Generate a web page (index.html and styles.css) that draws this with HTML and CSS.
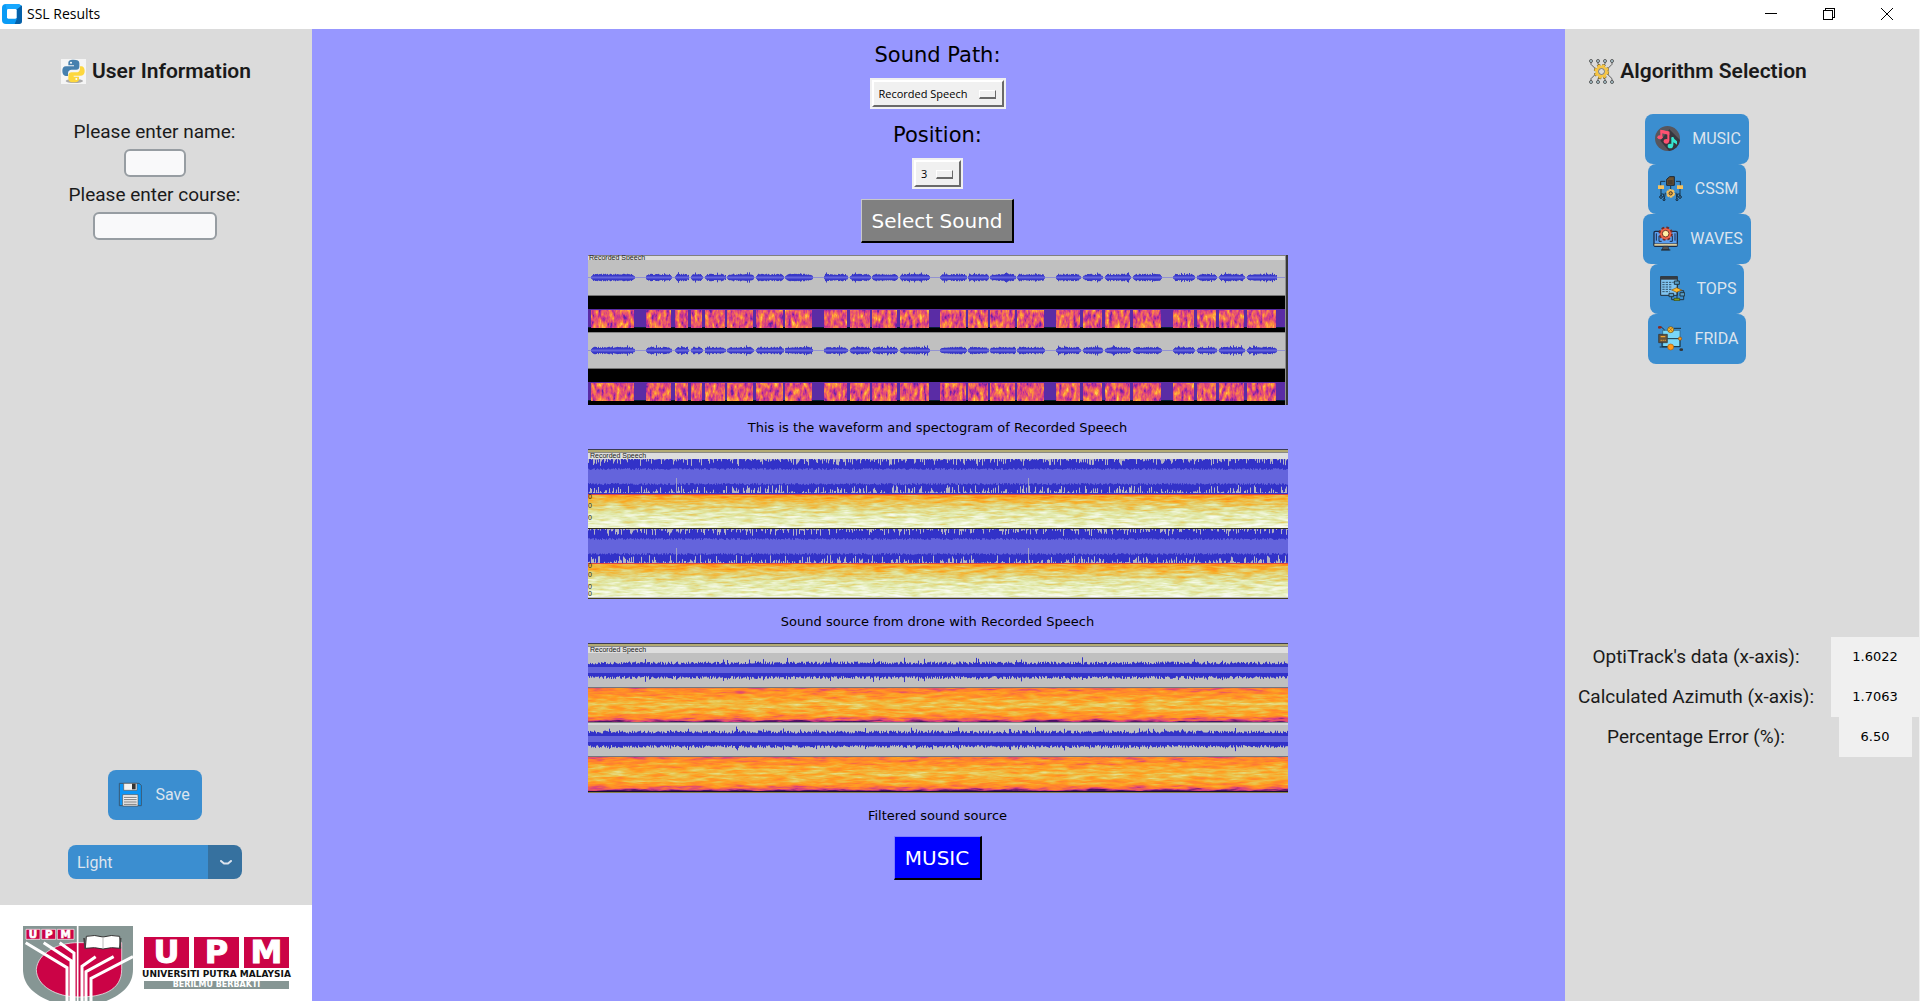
FILE: index.html
```html
<!DOCTYPE html>
<html lang="en">
<head>
<meta charset="utf-8">
<title>SSL Results</title>
<link rel="stylesheet" href="styles.css">
</head>
<body>
<header class="titlebar">
  <svg class="app-icon" viewBox="0 0 60 60" aria-hidden="true"><path fill="#0a9bf5" d="M12 0h36v60H12A12 12 0 0 1 0 48V12A12 12 0 0 1 12 0z"/><path fill="#0560a8" d="M60 6v46a8 8 0 0 1-8 8H38l6-14V14l6-10a9 9 0 0 1 10 2z"/><path fill="#18a8ff" d="M10 0h42l6 5-12 10H14z"/><rect x="15" y="15" width="29" height="29" rx="4" fill="#fff"/></svg>
  <h1 class="window-title">SSL Results</h1>
  <div class="window-buttons">
    <button class="window-button" aria-label="Minimize"><svg viewBox="0 0 12 12" shape-rendering="crispEdges"><path d="M0 5.500h12" /></svg></button>
    <button class="window-button" aria-label="Restore"><svg viewBox="0 0 12 12" shape-rendering="crispEdges"><path d="M.5 2.500h9v9h-9zM2.500 2V.5h9v9H10"/></svg></button>
    <button class="window-button" aria-label="Close"><svg viewBox="0 0 12 12"><path d="M0 0l12 12M12 0L0 12"/></svg></button>
  </div>
</header>
<div class="workspace">
  <aside class="user-panel">
    <h2 class="panel-title">
      <svg class="icon" viewBox="0 0 75 75" aria-hidden="true"><rect width="75" height="75" fill="#f5f5f5"/><ellipse cx="40" cy="66" rx="26" ry="6" fill="#aaa"/><path fill="#4680ae" d="M38 2c-14 0-16 5-16 10v7h17v3H15C7 22 4 28 4 36s4 15 10 15h7v-8c0-7 5-11 11-11h14c5 0 9-4 9-9V12C55 5 49 2 38 2z"/><path fill="#fdd73e" d="M38 70c14 0 16-5 16-10v-7H38v-3h22c8 0 11-6 11-14s-4-14-10-14h-4v7c0 7-5 11-11 11H32c-6 0-10 4-10 9v10c0 7 5 11 16 11z"/><circle cx="30" cy="11" r="3" fill="#fff"/><circle cx="46" cy="60" r="3" fill="#fff"/></svg>
      User Information
    </h2>
    <form class="user-form">
      <label class="field-label" for="name">Please enter name:</label>
      <input class="field field-short" id="name" type="text">
      <label class="field-label" for="course">Please enter course:</label>
      <input class="field field-long" id="course" type="text">
    </form>
    <div class="panel-actions">
      <button class="action-button save-button">
        <svg class="icon" viewBox="0 0 75 75" aria-hidden="true"><path fill="#0b95f7" stroke="#3b5871" stroke-width="3" d="M4 4h59l7 6v61H4z"/><path fill="#f2f2f2" stroke="#555" stroke-width="2" d="M17 4h40v21H17z"/><path fill="#333" d="M42 5h11v17H42z"/><path fill="#f2f2f2" stroke="#555" stroke-width="2" d="M14 38h46v34H14z"/><path stroke="#777" stroke-width="3" d="M18 46h38M18 53h38M18 60h38M18 67h38"/></svg>
        Save
      </button>
      <div class="theme-picker">
        <select class="theme-select" aria-label="Appearance mode"><option>Light</option><option>Dark</option><option>System</option></select>
        <svg class="theme-arrow" viewBox="0 0 12 6" aria-hidden="true"><path d="M1 1l3 2.500h4L11 1"/></svg>
      </div>
    </div>
    <div class="logo-panel">
      <svg class="crest" viewBox="0 0 330 225" role="img" aria-label="UPM crest">
        <path fill="#869694" d="M0 0h330v130c0 60-50 95-165 120C50 225 0 190 0 130z"/>
        <path fill="#cb0346" stroke="#fff" stroke-width="2" d="M40 130C45 80 105 50 165 50h131v80c0 65-60 83-128 83S40 180 40 130z"/>
        <g fill="#cb0346" stroke="#fff" stroke-width="2"><path d="M9 10h42v30H9zM56 10h42v30H56zM103 10h50v30h-50z"/></g>
        <g class="crest-letters"><text x="30" y="36">U</text><text x="77" y="36">P</text><text x="128" y="36">M</text></g>
        <path fill="none" stroke="#fff" stroke-width="5" d="M164 0v250"/>
        <g fill="none" stroke="#fff" stroke-width="9"><path d="M8 50l124 75v120M62 50l82 54v140M110 50l43 31v165M330 92l-126 65v90M272 92l-83 45v110M218 92l-41 29v125"/></g>
        <path fill="#fff" stroke="#333" stroke-width="3" d="M190 31q25-6 50 2 25-8 50-2l3 36q-28-5-53 2-25-7-53-2z"/><path fill="none" stroke="#bbb" stroke-width="3" d="M240 34v33"/><path stroke="#444" stroke-width="5" d="M183 36l4 32M293 36l-3 32"/>
      </svg>
      <div class="wordmark">
        <div class="wordmark-tiles"><span>U</span><span>P</span><span>M</span></div>
        <div class="wordmark-name">UNIVERSITI PUTRA MALAYSIA</div>
        <div class="wordmark-motto">BERILMU BERBAKTI</div>
      </div>
    </div>
  </aside>

  <main class="sound-panel">
    <label class="sound-label" for="path">Sound Path:</label>
    <div class="option-menu path-menu"><select id="path"><option>Recorded Speech</option></select></div>
    <label class="sound-label" for="position">Position:</label>
    <div class="option-menu position-menu"><select id="position"><option>3</option></select></div>
    <button class="tk-button select-sound">Select Sound</button>
    <div class="plots">
      <figure class="plot"><svg class="plot-image" id="plot-source" viewBox="0 0 700 150" role="img" aria-label="Waveform and spectrogram"></svg><figcaption>This is the waveform and spectogram of Recorded Speech</figcaption></figure>
      <figure class="plot"><svg class="plot-image" id="plot-drone" viewBox="0 0 700 150" role="img" aria-label="Drone recording"></svg><figcaption>Sound source from drone with Recorded Speech</figcaption></figure>
      <figure class="plot"><svg class="plot-image" id="plot-filtered" viewBox="0 0 700 150" role="img" aria-label="Filtered recording"></svg><figcaption>Filtered sound source</figcaption></figure>
    </div>
    <button class="tk-button algorithm-name">MUSIC</button>
  </main>

  <aside class="algorithm-panel">
    <div class="algorithm-column">
      <h2 class="panel-title">
        <svg class="icon" viewBox="0 0 75 75" aria-hidden="true"><g fill="none" stroke="#444" stroke-width="2.500"><path d="M6 6v10l14 14M27 6v9l5 8M48 6v9l-5 8M69 6v10L55 30M6 69V59l14-14M27 69v-9l5-8M48 69v-9l-5-8M69 69V59L55 45"/><g fill="#b5d3dd"><circle cx="6" cy="6" r="4.500"/><circle cx="27" cy="6" r="4.500"/><circle cx="48" cy="6" r="4.500"/><circle cx="69" cy="6" r="4.500"/><circle cx="6" cy="69" r="4.500"/><circle cx="27" cy="69" r="4.500"/><circle cx="48" cy="69" r="4.500"/><circle cx="69" cy="69" r="4.500"/></g></g><circle cx="37.500" cy="37.500" r="19" fill="none" stroke="#6b5720" stroke-width="8" stroke-dasharray="9 5.920"/><circle cx="37.500" cy="37.500" r="19" fill="none" stroke="#f6c544" stroke-width="5" stroke-dasharray="8 6.920"/><circle cx="37.500" cy="37.500" r="14" fill="#ddd" stroke="#f6c544" stroke-width="8"/><circle cx="37.500" cy="37.500" r="9" fill="#dbdbdb" stroke="#4c4b42" stroke-width="2"/></svg>
        Algorithm Selection
      </h2>
      <div class="algorithm-list">
        <button class="action-button"><svg class="icon" viewBox="0 0 75 75" aria-hidden="true"><circle cx="37.500" cy="37.500" r="37.500" fill="#57565d"/><path fill="#37363e" d="M43 10l32 32A37 37 0 0 1 42 75L16 44z"/><g fill="none" stroke="#ff5271" stroke-width="6"><path d="M19 34V15l21 4v27"/></g><path fill="#ff5271" d="M17 11l26 7v9l-26-6z"/><ellipse cx="15" cy="34" rx="8" ry="6" fill="#ff5271"/><ellipse cx="34" cy="46" rx="8" ry="7" fill="#ff5271"/><path fill="none" stroke="#35e6cf" stroke-width="6" d="M52 59V36q0 8 11 14"/><path fill="#35e6cf" d="M49 33h6q2 8 11 13v10q-8-8-13-8z"/><ellipse cx="46" cy="60" rx="8" ry="7" fill="#35e6cf"/></svg>MUSIC</button>
        <button class="action-button"><svg class="icon" viewBox="0 0 75 75" aria-hidden="true"><path fill="none" stroke="#173247" stroke-width="3" d="M22 16H8v18M54 16h13v18M38 30v10M9 38v16h8v10M66 38v16h-8v10M22 50l-3 20M54 50l3 20M9 54v8M66 54v8"/><path fill="#6b5130" stroke="#1c2733" stroke-width="3" d="M35 2h14v26H26V10z"/><path stroke="#2e2d2d" stroke-width="3" d="M30 15h14M30 21h14"/><path fill="#f5c15d" d="M0 28h18v11H0zM57 28h18v11H57z"/><circle cx="38" cy="52" r="10" fill="#f5c15d" stroke="#f5c15d" stroke-width="6" stroke-dasharray="8 2"/><circle cx="38" cy="52" r="5" fill="#d49a3c" stroke="#42342a" stroke-width="3"/><g fill="#3b8ed0" stroke="#152b3d" stroke-width="3"><circle cx="9" cy="63" r="4"/><circle cx="18" cy="71" r="3"/><circle cx="57" cy="71" r="3"/><circle cx="66" cy="63" r="4"/></g></svg>CSSM</button>
        <button class="action-button"><svg class="icon" viewBox="0 0 75 75" aria-hidden="true"><rect x="3" y="16" width="70" height="45" rx="4" fill="#5b9ff0" stroke="#1b2c47" stroke-width="4"/><path fill="#f5e0a5" stroke="#1b2c47" stroke-width="2" d="M3 53h70v7H3z"/><path fill="#555" stroke="#1b2c47" stroke-width="2" d="M31 61h14l3 10H27z"/><path stroke="#222" stroke-width="3" d="M24 72h28"/><path fill="none" stroke="#1b2c47" stroke-width="3" d="M10 22v22M18 30v16h8M66 22v22M58 30v16h-8"/><circle cx="38" cy="23" r="18" fill="#e85c43" stroke="#702d2a" stroke-width="7" stroke-dasharray="8 6.100"/><circle cx="38" cy="23" r="16" fill="#f06349"/><circle cx="38" cy="23" r="10" fill="#fff0a8" stroke="#743124" stroke-width="3"/></svg>WAVES</button>
        <button class="action-button"><svg class="icon" viewBox="0 0 75 75" aria-hidden="true"><path fill="#80c4f1" stroke="#202e3c" stroke-width="3" d="M2 2h50v56H2z"/><path fill="#343b42" d="M1 1h52v10H1z"/><path stroke="#315268" stroke-width="3" stroke-dasharray="7 3" d="M7 19h34M7 26h30M7 33h30M7 40h30M7 47h22"/><path fill="none" stroke="#203744" stroke-width="3" d="M52 20v17M35 57h-8M61 44h10v10M51 46v25M71 60v11H56M35 59v12h10"/><g fill="#579dc7" stroke="#203744" stroke-width="3"><path d="M43 15h15v10H43zM27 52h14v10H27zM60 50h14v10H60z"/></g><path fill="#ffb928" stroke="#835414" stroke-width="2" d="M50 35l15 7-15 7-15-7z"/><path fill="#829c1b" stroke="#344616" stroke-width="2" d="M42 67h17v7H42z"/></svg>TOPS</button>
        <button class="action-button"><svg class="icon" viewBox="0 0 75 75" aria-hidden="true"><path fill="#79d8f8" stroke="#2c5b76" stroke-width="2" d="M14 13h52v49H14z"/><path fill="none" stroke="#173342" stroke-width="3" d="M3 4h8l9 8M48 7h21M28 38h38M66 38v25M12 50v12h54M5 63h24"/><path fill="#65533b" stroke="#2c2d2a" stroke-width="2" d="M2 25h26v25H2z"/><path stroke="#f0a633" stroke-width="4" d="M8 32h14M8 43h3M14 43h3M20 43h3"/><circle cx="38" cy="11" r="9" fill="#f5c22d" stroke="#614718" stroke-width="2"/><path stroke="#a44c24" stroke-width="2" d="M31 17l14-13M33 5l11 12"/><circle cx="38" cy="63" r="9" fill="#ff9816" stroke="#a56016" stroke-width="2"/><circle cx="66" cy="38" r="5" fill="#ff9816" stroke="#875014" stroke-width="2"/><ellipse cx="5" cy="4" rx="6" ry="4" fill="#8e2922"/><ellipse cx="70" cy="71" rx="6" ry="4" fill="#333"/></svg>FRIDA</button>
      </div>
    </div>
    <dl class="readings">
      <dt>OptiTrack's data (x-axis):</dt><dd>1.6022</dd>
      <dt>Calculated Azimuth (x-axis):</dt><dd>1.7063</dd>
      <dt>Percentage Error (%):</dt><dd class="error-value">6.50</dd>
    </dl>
  </aside>
</div>

<svg class="defs" aria-hidden="true">
  <defs>
    <linearGradient id="pale-levels" x2="0" y2="1"><stop stop-color="#202020"/><stop offset=".25" stop-color="#606060"/><stop offset=".55" stop-color="#999"/><stop offset="1" stop-color="#c4c4c4"/></linearGradient>
    <linearGradient id="warm-levels" x2="0" y2="1"><stop stop-color="#606060"/><stop offset=".12" stop-color="#808080"/><stop offset=".5" stop-color="#c4c4c4"/><stop offset=".8" stop-color="#989898"/><stop offset=".93" stop-color="#505050"/><stop offset="1" stop-color="#000"/></linearGradient>
    <filter id="pale" x="0" y="0" width="1" height="1" color-interpolation-filters="sRGB"><feTurbulence type="fractalNoise" baseFrequency=".06 .4" numOctaves="3" seed="4"/><feColorMatrix values="1 0 0 0 0 1 0 0 0 0 1 0 0 0 0 0 0 0 0 1"/><feComposite in2="SourceGraphic" operator="arithmetic" k2=".7" k3="1" k4="-.35"/><feComponentTransfer><feFuncR type="table" tableValues="1 .97 .9 .88 .95 1"/><feFuncG type="table" tableValues=".53 .68 .8 .91 .97 1"/><feFuncB type="table" tableValues=".1 .16 .4 .66 .87 1"/></feComponentTransfer></filter>
    <filter id="warm" x="0" y="0" width="1" height="1" color-interpolation-filters="sRGB"><feTurbulence type="fractalNoise" baseFrequency=".05 .35" numOctaves="3" seed="9"/><feColorMatrix values="1 0 0 0 0 1 0 0 0 0 1 0 0 0 0 0 0 0 0 1"/><feComposite in2="SourceGraphic" operator="arithmetic" k2=".7" k3="1" k4="-.35"/><feComponentTransfer><feFuncR type="table" tableValues=".3 .85 1 1 .92 .9"/><feFuncG type="table" tableValues=".06 .25 .48 .62 .77 .9"/><feFuncB type="table" tableValues=".4 .5 .2 .13 .3 .6"/></feComponentTransfer></filter>
    <filter id="voice" x="0" y="0" width="1" height="1" color-interpolation-filters="sRGB"><feTurbulence type="fractalNoise" baseFrequency=".28 .12" numOctaves="3" seed="5"/><feColorMatrix values="1 0 0 0 0 1 0 0 0 0 1 0 0 0 0 0 0 0 0 1"/><feComposite in2="SourceGraphic" operator="arithmetic" k2="1.500" k3="1" k4="-.75"/><feComponentTransfer><feFuncR type="table" tableValues=".4 .72 .88 .95 1 1"/><feFuncG type="table" tableValues=".14 .18 .28 .42 .6 .8"/><feFuncB type="table" tableValues=".65 .6 .48 .36 .22 .3"/></feComponentTransfer></filter>
  </defs>
</svg>
<script src="plots.js"></script>
</body>
</html>
```

FILE: styles.css
```css
* { box-sizing: border-box; }
body {
  margin: 0;
  min-height: 100vh;
  display: flex;
  flex-direction: column;
  background: #fff;
  color: #1a1a1a;
  font-family: Roboto, sans-serif;
}
button, select, input { font: inherit; margin: 0; border-radius: 0; }
h1, h2, dl, dd, figure { margin: 0; }

.titlebar { height: 29px; display: flex; align-items: center; padding: 0 4px 1px 2px; background: #fff; color: #000; }
.app-icon { width: 20px; height: 20px; }
.window-title { flex: 1; padding-left: 5px; font: 400 14px/20px "Open Sans", sans-serif; }
.window-buttons { display: flex; }
.window-button { width: 58px; height: 28px; padding: 0; border: 0; background: none; display: grid; place-items: center; }
.window-button svg { width: 12px; height: 12px; fill: none; stroke: #000; stroke-width: 1; }

.workspace { flex: 1; display: grid; grid-template-columns: 312px 1fr 355px; }
.user-panel { background: #dbdbdb; display: flex; flex-direction: column; align-items: center; }
.panel-title { display: flex; align-items: center; justify-content: center; gap: 6px; padding-top: 29px; font-size: 21px; line-height: 26px; font-weight: 600; }
.icon { width: 25px; height: 25px; flex: none; }
.user-form { display: flex; flex-direction: column; align-items: center; gap: 4px; padding: 34px 3px 0 0; }
.field-label { font-size: 19px; line-height: 27px; }
.field { height: 28px; border: 2px solid #979da2; border-radius: 6px; background: #f9f9fa; }
.field-short { width: 62px; }
.field-long { width: 124px; }
.panel-actions { margin-top: auto; padding: 0 2px 26px 0; display: flex; flex-direction: column; align-items: center; gap: 25px; }
.action-button { height: 50px; display: flex; align-items: center; gap: 12px; padding: 0 8px 1px 10px; border: 0; border-radius: 8px; background: #3b8ed0; color: #dce4ee; font-size: 16px; }
.save-button { padding-right: 12px; }
.theme-picker { position: relative; }
.theme-select { display: block; width: 174px; height: 34px; padding: 0 9px; appearance: none; border: 0; border-radius: 8px; background: linear-gradient(to left, #36719f 34px, #3b8ed0 34px); color: #dce4ee; font-size: 16px; }
.theme-arrow { position: absolute; right: 10px; top: 15px; width: 12px; height: 6px; fill: none; stroke: #dce4ee; stroke-width: 2; stroke-linecap: round; stroke-linejoin: round; }

.logo-panel { width: 100%; height: 96px; overflow: hidden; background: #fff; display: flex; gap: 11px; padding: 21px 0 0 23px; }
.crest { width: 110px; height: 75px; flex: none; }
.crest-letters { fill: #fff; stroke: #fff; stroke-width: 2px; font: 700 31px "DejaVu Sans", sans-serif; text-anchor: middle; }
.wordmark { padding-top: 11px; width: 145px; font-family: "DejaVu Sans", sans-serif; font-weight: 700; text-align: center; white-space: nowrap; }
.wordmark-tiles { display: grid; grid-template-columns: repeat(3, 1fr); gap: 5px; }
.wordmark-tiles span { height: 31px; background: #cb0346; color: #fff; font-size: 32px; line-height: 31px; -webkit-text-stroke: 1px #fff; }
.wordmark-name { color: #111; font-size: 9px; line-height: 13px; display: flex; justify-content: center; }
.wordmark-motto { height: 8px; background: #869694; color: #fff; font-size: 8px; line-height: 8px; }

.sound-panel { background: #9797ff; color: #000; display: flex; flex-direction: column; align-items: center; gap: 10px; padding: 10px 2px 10px 0; font-family: "DejaVu Sans", sans-serif; }
.sound-label { padding-top: 3px; font-size: 21px; line-height: 26px; }
.option-menu { position: relative; height: 31px; padding: 2px; background: #f0f0f0; }
.option-menu select { display: block; width: 100%; height: 27px; padding: 0 5px; appearance: none; border: 2px solid; border-color: #fff #696969 #696969 #fff; background: #f0f0f0; color: #000; font: 11px "Open Sans", sans-serif; }
.option-menu::after { content: ""; position: absolute; right: 10px; top: 12px; width: 15px; height: 6px; border: 1px solid; border-color: #fff #696969 #696969 #fff; border-bottom-width: 2px; pointer-events: none; }
.path-menu { width: 136px; }
.position-menu { width: 51px; }
.tk-button { height: 44px; padding: 1px 8px 0; border: 1px solid; border-right: 2px solid #000; border-bottom: 2px solid #000; color: #fff; font-size: 20px; white-space: nowrap; }
.select-sound { width: 153px; background: #808080; border-top-color: #c8c8c8; border-left-color: #c8c8c8; }
.algorithm-name { width: 88px; background: #00f; border-top-color: #7d7dff; border-left-color: #7d7dff; }
.plots { display: flex; flex-direction: column; gap: 11px; padding-top: 2px; }
.plot { display: flex; flex-direction: column; align-items: center; gap: 13px; font-size: 13px; line-height: 20px; }
.plot-image { width: 700px; height: 150px; }
.plot-image text { font: 7px "Liberation Sans", sans-serif; fill: #222; }

.algorithm-panel { background: #dbdbdb; border-right: 1px solid #f0f0f0; }
.algorithm-column { width: 266px; }
.algorithm-list { display: flex; flex-direction: column; align-items: center; padding: 30px 2px 0 0; }
.readings { display: grid; grid-template-columns: 266px 88px; grid-auto-rows: 40px; margin-top: 273px; text-align: center; line-height: 40px; }
.readings dt { padding-right: 4px; font-size: 19px; }
.readings dd { background: #f0f0f0; color: #000; font-family: "DejaVu Sans", sans-serif; font-size: 13px; }
.readings .error-value { width: 73px; justify-self: center; }
.defs { position: absolute; width: 0; height: 0; }
```

FILE: plots.js
```js
const NS = "http://www.w3.org/2000/svg";
let state = 7;
function random() {
  state = (state * 16807) % 2147483647;
  return state / 2147483647;
}
function add(svg, name, attributes) {
  const node = document.createElementNS(NS, name);
  for (const key in attributes) node.setAttribute(key, attributes[key]);
  svg.appendChild(node);
  return node;
}
function bar(svg, x, y, width, height, fill, filter) {
  const attributes = { x, y, width, height, fill };
  if (filter) attributes.filter = "url(#" + filter + ")";
  add(svg, "rect", attributes);
}
function title(svg, x, y) {
  add(svg, "text", { x, y }).textContent = "Recorded Speech";
}
/* One vertical stroke per pixel column; extent(x) gives [top, bottom]. */
function wave(svg, from, to, extent, stroke) {
  let d = "";
  for (let x = from; x < to; x++) {
    const [top, bottom] = extent(x);
    d += `M${x + 0.5} ${top.toFixed(1)}V${bottom.toFixed(1)}`;
  }
  add(svg, "path", { d, stroke, "stroke-width": 1 });
}

const phrases = [[3,47],[58,84],[87,101],[103,115],[117,138],[139,166],[168,196],[197,225],[236,260],[262,283],[284,310],[312,342],[352,379],[380,401],[402,428],[429,457],[468,493],[495,515],[517,543],[545,574],[585,607],[609,629],[631,657],[659,689]];

function drawSource(svg) {
  bar(svg, 0, 0, 700, 150, "#000");
  bar(svg, 0, 0, 700, 1, "#808080");
  bar(svg, 0, 1, 698, 4, "#dcdcdc");
  title(svg, 1, 5);
  for (const [top, height, spectrum] of [[5, 35, 54], [78, 35, 127]]) {
    const middle = top + 18;
    bar(svg, 0, top, 698, height, "#c0c0c0");
    bar(svg, 0, top + height, 698, 1, "#747474");
    bar(svg, 0, middle - 1, 698, 1, "#9292d2");
    bar(svg, 0, spectrum, 698, 18, "#5a2ca5");
    bar(svg, 0, spectrum + 18, 698, 1, "#082034");
    for (const [from, to] of phrases) {
      wave(svg, from, to, x => {
        const fade = Math.min(1, (x - from + 2) / 4, (to - x + 1) / 4);
        const amp = (2.5 + random() * 1.3 + (random() > 0.93 ? 1.5 : 0)) * fade;
        return [middle - 0.5 - amp, middle - 0.5 + amp];
      }, "#3838c8");
      wave(svg, from, to, () => [middle - 1.5, middle + 0.5], "#6464dc");
      bar(svg, from, spectrum + 1, to - from - 1, 18, "#7c7c7c", "voice");
    }
  }
  bar(svg, 0, 77, 698, 1, "#858585");
  bar(svg, 697, 1, 1, 149, "#909090");
  bar(svg, 698, 0, 2, 150, "#383838");
}

function heading(svg) {
  bar(svg, 0, 0, 700, 150, "#c0c0c0");
  bar(svg, 0, 0, 700, 1, "#3c3c50");
  bar(svg, 0, 1, 700, 2, "#b2aa73");
  bar(svg, 0, 3, 700, 1, "#888");
  bar(svg, 0, 4, 700, 6, "#dedede");
  title(svg, 2, 9);
}

function drawDrone(svg) {
  heading(svg);
  for (const [top, spectrum] of [[10, 46], [80, 115]]) {
    bar(svg, 0, top, 700, 35, "#3232c8");
    wave(svg, 0, 700, () => [top, top + Math.pow(random(), 4) * 7], "#b4b4c4");
    wave(svg, 0, 700, () => [top + 34 - Math.pow(random(), 4) * 8, top + 34], "#b4b4c4");
    wave(svg, 0, 700, () => [top + 9 + random() * 2, top + 24 + random() * 2], "#6464dc");
    for (const x of [88, 440]) bar(svg, x, top + 19, 1, 15, "#a0a0c4");
    bar(svg, 0, spectrum - 1, 700, 1, "#dc4444");
    bar(svg, 0, spectrum, 700, 33, "url(#pale-levels)", "pale");
    for (const y of [4, 13, 25]) add(svg, "text", { x: 0, y: spectrum + y }).textContent = "0";
  }
  bar(svg, 0, 79, 700, 1, "#34301c");
  add(svg, "text", { x: 0, y: 147 }).textContent = "0";
  bar(svg, 0, 149, 700, 1, "#46401e");
}

function drawFiltered(svg) {
  heading(svg);
  for (const [middle, spectrum] of [[27, 45], [96, 114]]) {
    wave(svg, 0, 700, () => {
      const peak = random() > 0.93 ? random() * 5 : 0;
      return [middle - 5.5 - random() * 3 - peak, middle + 6 + random() * 3 + peak * 0.7];
    }, "#3232c8");
    wave(svg, 0, 700, () => [middle - 3, middle + 3], "#6464dc");
    bar(svg, 0, spectrum - 1, 700, 1, "#75757b");
    bar(svg, 0, spectrum, 700, 34, "url(#warm-levels)", "warm");
  }
  bar(svg, 0, 79, 700, 1, "#858585");
  bar(svg, 0, 80, 700, 2, "#d5d5d5");
  bar(svg, 0, 148, 700, 1, "#180d2d");
  bar(svg, 0, 149, 700, 1, "#88804c");
}

drawSource(document.getElementById("plot-source"));
drawDrone(document.getElementById("plot-drone"));
drawFiltered(document.getElementById("plot-filtered"));
```
